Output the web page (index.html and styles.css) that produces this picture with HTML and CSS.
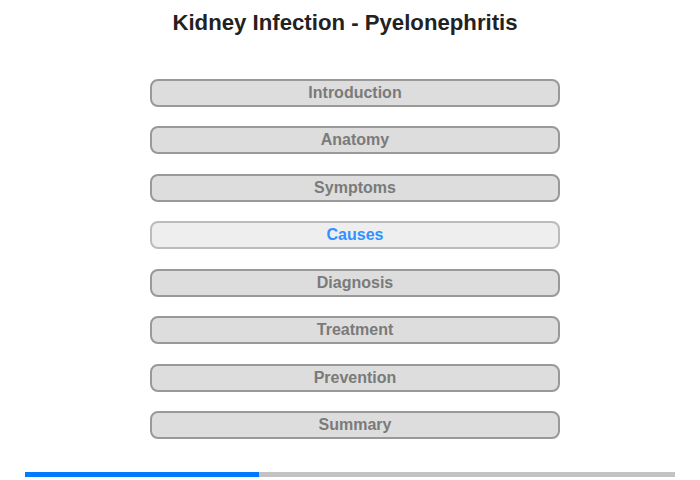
FILE: index.html
```html
<!DOCTYPE html>
<html>
<head>
<meta charset="utf-8">
<link rel="stylesheet" href="styles.css">
</head>
<body>
<div class="page">
  <h1 class="title">Kidney Infection - Pyelonephritis</h1>
  <nav class="menu">
    <div class="item">Introduction</div>
    <div class="item">Anatomy</div>
    <div class="item">Symptoms</div>
    <div class="item active">Causes</div>
    <div class="item">Diagnosis</div>
    <div class="item">Treatment</div>
    <div class="item">Prevention</div>
    <div class="item">Summary</div>
  </nav>
  <div class="progress"><div class="progress-fill" style="width:36%"></div></div>
</div>
</body>
</html>
```
FILE: styles.css
```css
html, body {
  margin: 0;
  padding: 0;
  background: #fff;
}
.page {
  width: 700px;
  height: 480px;
  display: flex;
  flex-direction: column;
  align-items: center;
  font-family: "Liberation Sans", Arial, sans-serif;
}
.title {
  margin: 10px 0 0 0;
  font-size: 22.2px;
  line-height: 26px;
  font-weight: bold;
  color: #222;
  padding-right: 10px;
}
.menu {
  margin-top: 43px;
  margin-left: 10px;
  display: flex;
  flex-direction: column;
  gap: 19.45px;
  width: 410px;
}
.item {
  box-sizing: border-box;
  height: 28px;
  border: 2px solid #999;
  border-radius: 8px;
  background: #ddd;
  color: #7a7a7a;
  font-size: 16px;
  font-weight: bold;
  line-height: 24px;
  text-align: center;
}
.item.active {
  border-color: #bbb;
  background: #eee;
  color: #3390ff;
}
.progress {
  margin-top: 33px;
  width: 650px;
  height: 5px;
  background: #c3c3c3;
  display: flex;
}
.progress-fill {
  background: #007bff;
  height: 100%;
}
```
